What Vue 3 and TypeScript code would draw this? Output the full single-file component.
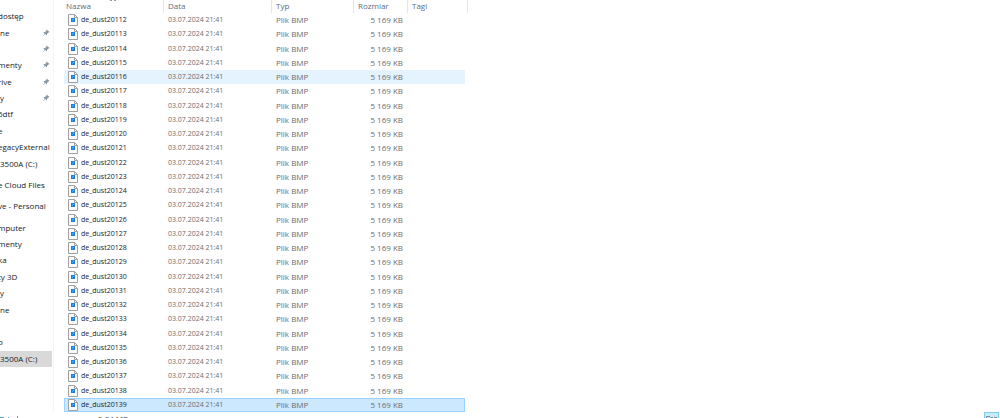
<script setup lang="ts">
import { ref } from 'vue'

interface Place {
  label: string
  cut?: boolean
  pinned?: boolean
  current?: boolean
  spaced?: boolean
}

const places: Place[] = [
  { label: 'dostęp', cut: true },
  { label: 'ne', pinned: true },
  { label: '', pinned: true },
  { label: 'menty', cut: true, pinned: true },
  { label: 'rive', cut: true, pinned: true },
  { label: 'y', pinned: true },
  { label: '6dtf', cut: true },
  { label: 'e', cut: true },
  { label: 'egacyExternal', cut: true },
  { label: '3500A (C:)' },
  { label: 'e Cloud Files', cut: true, spaced: true },
  { label: 've - Personal', cut: true, spaced: true },
  { label: 'mputer', cut: true, spaced: true },
  { label: 'menty', cut: true },
  { label: 'ka', cut: true },
  { label: 'ty 3D', cut: true },
  { label: 'y' },
  { label: 'ne' },
  { label: '' },
  { label: 'o', cut: true },
  { label: '3500A (C:)', current: true },
]

const files = Array.from({ length: 28 }, (_, i) => `de_dust${20112 + i}`)
const hovered = 'de_dust20116'
const selected = ref('de_dust20139')
</script>

<template>
  <div class="explorer">
    <div class="panes">
      <nav class="places" aria-label="Foldery">
        <div
          v-for="(place, i) in places"
          :key="i"
          class="place"
          :class="{ current: place.current, spaced: place.spaced }"
        >
          <a v-if="place.label" href="#" :class="{ cut: place.cut }">{{ place.label }}</a>
          <svg v-if="place.pinned" class="pin" viewBox="0 0 8 8" aria-hidden="true">
            <path d="M4.7.5 7.5 3.1 6.5 3.5 5.1 5 4.9 6.5 3.2 5.1.6 7.6 2.6 4.5 1.2 3 3 2.9 4.5 1.4Z" />
          </svg>
        </div>
      </nav>
      <main class="content">
        <table class="files">
          <thead>
            <tr>
              <th scope="col">
                Nazwa
                <svg class="sort" viewBox="0 0 6 1" aria-hidden="true">
                  <path d="M0 0H2V1H0ZM4 0H6V1H4Z" />
                </svg>
              </th>
              <th scope="col">Data</th>
              <th scope="col">Typ</th>
              <th scope="col">Rozmiar</th>
              <th scope="col">Tagi</th>
            </tr>
          </thead>
          <tbody>
            <tr
              v-for="file in files"
              :key="file"
              :class="{ hovered: file === hovered, selected: file === selected }"
              @click="selected = file"
            >
              <td class="name">
                <svg class="icon" viewBox="0 0 10 12" aria-hidden="true">
                  <path class="sheet" d="M.5.5H6.5L9.5 3.5V11.5H.5Z" />
                  <path class="fold" d="M6.5.5V3.5H9.5" />
                  <rect class="image" x="3" y="4" width="4" height="4" />
                  <path class="shine" d="M4 6.5 6 5" />
                </svg>
                <span>{{ file }}</span>
              </td>
              <td class="date">03.07.2024 21:41</td>
              <td>Plik BMP</td>
              <td class="size">5 169 KB</td>
              <td></td>
            </tr>
          </tbody>
        </table>
      </main>
    </div>
    <footer class="status">
      <svg class="count" viewBox="0 0 20 2" aria-hidden="true">
        <path d="M0 1H4V2H0ZM8 1H9V2H8ZM17 0H18V2H17Z" />
      </svg>
      <span class="total">5,04 MB</span>
      <button class="view" type="button" aria-label="Szczegóły">
        <svg viewBox="0 0 12 3" aria-hidden="true">
          <path d="M.5 3V.5H4M4.5 1.5H7M8 1.5H11" />
        </svg>
      </button>
    </footer>
  </div>
</template>

<style>
body {
  margin: 0;
  background: #fff;
}
</style>

<style scoped>
.explorer {
  display: flex;
  flex-direction: column;
  height: 100vh;
  overflow: hidden;
  font: 8px/12px 'Open Sans', 'Noto Sans', sans-serif;
  color: #222;
}
.panes {
  display: flex;
  flex: 1;
  min-height: 0;
}
.places {
  display: flex;
  flex-direction: column;
  box-sizing: border-box;
  flex: 0 0 52px;
  padding: 8px 0 45px;
}
.place {
  display: flex;
  flex: 1 1 0;
  align-items: center;
  justify-content: space-between;
  overflow: hidden;
  white-space: nowrap;
}
.spaced {
  margin-top: 5px;
}
.place a {
  color: inherit;
  text-decoration: none;
}
.place .cut {
  margin-left: -2px;
}
.current {
  background: #d9d9d9;
}
.pin {
  width: 8px;
  height: 8px;
  margin: 0 2px 0 auto;
  fill: #8d99a3;
}
.content {
  flex: 1;
  display: flex;
  margin-left: 1px;
  padding-left: 10px;
  border-left: 1px solid #f5f5f5;
}
.files {
  display: flex;
  flex-direction: column;
  flex: 1;
}
.files tr {
  display: grid;
  grid-template-columns: 100px 108px 82px 54px 57px;
  align-items: center;
  width: 401px;
}
.files thead {
  flex: 0 0 13px;
  color: #5b6b82;
}
.files thead tr {
  grid-template-columns: 100px 108px 82px 54px 60px;
  width: 404px;
}
.files th {
  position: relative;
  height: 13px;
  padding: 0 0 0 4px;
  border-right: 1px solid #e5e5e5;
  font-weight: 400;
  text-align: left;
}
.files th:first-child {
  padding-left: 2px;
}
.sort {
  position: absolute;
  top: 0;
  left: 46px;
  width: 6px;
  height: 1px;
  fill: #999;
}
.files tbody {
  flex: 1;
  display: grid;
  grid-auto-rows: 1fr;
}
.files td {
  padding: 0 0 0 4px;
  color: #6d6d6d;
  white-space: nowrap;
}
.files .name {
  display: flex;
  align-items: center;
  gap: 3px;
  font-size: 7px;
  color: #222;
}
.files .date {
  font-size: 7px;
}
.files .size {
  padding: 0 5px 0 0;
  text-align: right;
}
.files .hovered {
  background: #e5f3ff;
}
.files .selected {
  background: #cce8ff;
  box-shadow: inset 0 0 0 1px #99d1ff;
}
.icon {
  width: 10px;
  height: 12px;
}
.sheet {
  fill: #fafafa;
  stroke: #a0a0a0;
}
.fold {
  fill: none;
  stroke: #a0a0a0;
}
.image {
  fill: #1c7ddb;
}
.shine {
  stroke: #6cb8f2;
}
.status {
  display: flex;
  flex: 0 0 6px;
  overflow: hidden;
}
.count {
  align-self: flex-end;
  width: 20px;
  height: 2px;
  fill: #5c9fb5;
}
.total {
  margin: 1px auto 0 78px;
  color: #444;
}
.view {
  box-sizing: border-box;
  width: 15px;
  height: 6px;
  margin-right: 1px;
  padding: 2px 0 0 1px;
  border: 1px solid #82cde8;
  border-bottom: 0;
  background: #c9ebf7;
  line-height: 0;
}
.view svg {
  width: 12px;
  height: 3px;
  fill: none;
  stroke: #7a8790;
}
</style>
